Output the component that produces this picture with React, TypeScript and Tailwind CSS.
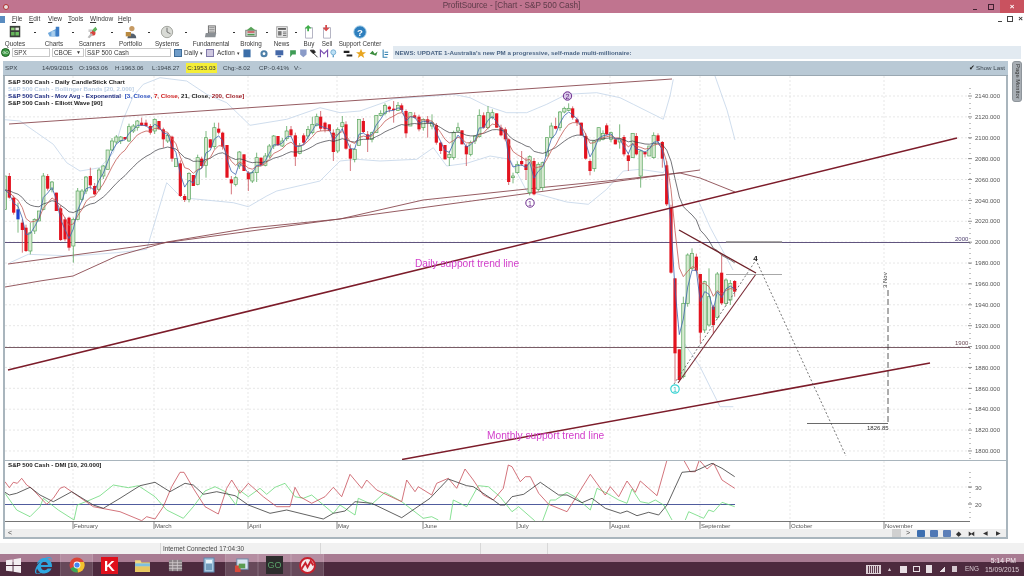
import React from "react";
import { FaInternetExplorer } from "react-icons/fa";

type C = number[];
// x, top, bottom, kind (0 red, 1 green, 2 blue), wickTop, wickBottom
const z3: C[] = [[15,300,400,1],[28,300,365,0],[41,365,410,0],[54,400,430,2,380,470],[67,440,462,0,430,530],[78,455,525,0],[91,470,525,1,440,535],[104,430,465,1],[117,405,435,1],[130,300,400,1],[143,300,338,0],[156,318,340,1],[169,350,405,0],[182,397,492,0],[195,430,490,0],[207,425,515,0],[220,430,510,1,425,560],[233,345,430,1],[246,345,370,1],[258,303,345,1],[271,300,328,0,275,340],[284,330,355,0],[297,282,340,1],[310,270,300,1],[323,222,280,1],[336,195,222,1],[349,183,198,1],[362,183,195,1],[375,183,190,0],[387,152,195,1],[400,150,165,1],[412,135,155,1],[425,140,148,0,125,150],[438,140,150,0],[451,150,170,0],[464,130,165,1],[477,135,160,0],[490,160,190,0,155,215],[503,178,195,1],[516,182,248,0],[528,248,272,1],[541,262,360,0],[554,360,372,0],[567,292,370,1],[580,297,330,0],[593,245,325,1],[605,248,270,0],[618,185,268,1,165,305],[631,190,215,0],[643,155,212,1,140,220],[656,158,170,0,140,175],[668,170,212,0],[681,207,305,0],[694,310,322,0,300,355],[707,305,325,1],[718,228,270,1],[732,235,285,0],[745,290,310,0,285,345],[757,290,315,1],[770,245,290,1,230,318],[783,245,268,0],[796,240,268,1],[808,210,240,1],[821,180,210,1],[834,180,208,0],[847,195,210,1],[860,165,188,1,150,195],[873,160,178,0,150,182],[886,178,242,0,170,270],[899,210,232,1],[911,178,200,0],[924,160,180,1,150,190],[937,145,170,1,122,175],[950,122,148,1],[962,122,158,0,105,165],[975,140,160,0],[988,145,165,0],[1000,170,228,0,160,255],[1013,160,225,1]];
const z4: C[] = [[7,140,152,1,120,165],[18,145,218,0],[31,218,248,0,205,285],[44,220,250,1],[57,130,208,1],[70,135,168,0],[83,175,190,0,165,228],[96,170,190,1],[109,118,170,1],[122,112,118,1],[135,88,112,1],[148,92,100,0],[161,98,102,0,75,140],[174,88,103,1,78,105],[185,88,102,0],[198,105,172,0,100,185],[211,110,150,1],[224,118,125,0],[237,122,160,0],[250,130,155,1],[263,130,140,0,120,185],[276,140,150,1,115,160],[289,147,200,0],[302,200,225,0],[315,207,250,0],[328,235,245,1,225,270],[341,170,245,1],[354,155,165,1,140,170],[366,163,205,0],[379,210,235,0,205,270],[392,200,235,1],[405,180,195,1],[418,118,182,1,100,185],[431,118,155,0],[444,110,155,1,90,160],[457,110,125,1,100,130],[470,112,155,0],[483,155,178,0],[496,160,190,0],[506,190,318,0],[519,300,305,1,290,322],[532,265,290,1],[545,255,265,0,225,270],[558,265,282,0,245,312],[569,242,350,1,238,358],[582,255,355,0],[595,265,340,1],[608,260,335,1],[621,185,240,1],[634,150,185,1,140,190],[647,150,158,0,125,160],[660,108,155,1],[673,97,108,1,92,112],[686,97,103,1,82,105],[698,97,125,0],[711,130,140,0,125,150],[724,140,178,0],[737,180,248,0],[750,255,285,0,250,298],[763,195,278,1],[776,155,195,1],[789,172,190,1],[800,148,175,0,142,178],[813,170,190,1],[826,190,205,0],[839,188,198,1,145,218],[852,183,235,0],[865,238,255,0,230,285],[878,172,245,1],[889,180,235,0],[902,225,300,1,222,335],[915,228,235,0],[928,210,240,1],[941,178,245,1],[954,178,195,0],[967,198,248,0,195,275],[980,268,385,0,255,390],[993,395,590,0]];
const z5: C[] = [[165,235,460,0,235,545],[178,448,540,0,448,545],[190,310,530,1,290,535],[203,165,310,1,160,320],[216,160,205,1,145,210],[229,170,212,0],[241,222,398,0,222,430],[254,245,390,1],[267,290,375,1,205,380],[280,320,375,0,315,400],[292,222,352,1],[305,218,310,0,165,315],[318,240,310,1,235,318],[331,250,300,1,240,315],[344,243,275,0,240,290]];

type K = { x: number; t: number; b: number; k: number; wt: number; wb: number };
const mk = (list: C[], ox: number, oy: number): K[] =>
  list.map((c, i) => ({
    x: ox + c[0] / 3,
    t: oy + c[1] / 3,
    b: oy + c[2] / 3,
    k: c[3],
    wt: c[4] !== undefined ? oy + c[4] / 3 : oy + c[1] / 3 - ((i * 7) % 4),
    wb: c[5] !== undefined ? oy + c[5] / 3 : oy + c[2] / 3 + ((i * 5) % 4),
  }));
const candles: K[] = [...mk(z3, 0, 76), ...mk(z4, 340, 76), ...mk(z5, 620, 200)];
const closes = candles.map((c) => (c.k === 0 ? c.b : c.t));
const ema = (n: number, seed: number) => {
  const a = 2 / (n + 1);
  let v = seed;
  return closes.map((c, i) => {
    v = i === 0 ? seed : a * c + (1 - a) * v;
    return `${candles[i].x.toFixed(1)},${v.toFixed(1)}`;
  }).join(" ");
};
const zp = (pts: number[][], ox: number, oy: number) => pts.map((p) => `${(ox + p[0] / 3).toFixed(1)},${(oy + p[1] / 3).toFixed(1)}`).join(" ");

const upper = [zp([[0,130],[60,135],[110,170],[160,205],[200,260],[240,285],[300,275],[340,230],[370,130],[400,60],[430,25],[480,5],[560,15],[620,55],[680,80],[750,148],[860,130],[960,95],[1020,110]],0,76), zp([[0,110],[60,105],[130,80],[160,68],[280,60],[340,55],[390,65],[440,90],[500,110],[560,110],[620,85],[680,55],[770,50],[840,65],[880,85],[970,130],[990,60],[1000,10]],340,76), "715,76 727,110 735,140", "698,200 710,227 733,270"];
const lower = [zp([[30,560],[85,535],[220,540],[350,530],[440,520],[470,420],[500,320],[545,365],[700,380],[745,392],[800,360],[830,345],[960,315],[1020,255]],0,76), zp([[0,255],[50,250],[120,255],[230,250],[280,215],[320,270],[380,262],[450,240],[510,250],[560,345],[680,378],[745,385],[800,340],[850,285],[900,280],[970,290],[980,270]],340,76), zp([[190,425],[240,500],[300,620],[340,620]],620,200)];

const redD = [[15,80],[28,98],[40,82],[52,85],[65,70],[80,90],[95,100],[140,148],[160,130],[180,100],[193,95],[215,110],[280,155],[360,170],[425,197],[440,185],[465,192],[490,155],[515,95],[540,52],[552,52],[580,100],[615,155],[655,177],[680,100],[695,75],[720,115],[745,85],[790,125],[830,155],[870,155],[885,97],[900,125],[935,145],[975,125],[1000,97],[1025,125],[1050,58],[1085,100],[1100,75],[1130,105],[1205,140],[1220,75],[1245,110],[1255,95],[1295,120],[1310,85],[1345,70],[1370,100],[1395,42],[1420,75],[1450,120],[1480,135],[1510,100],[1525,30],[1536,35],[1561,80],[1576,65],[1591,65],[1616,115],[1646,148],[1701,170],[1771,58],[1816,120],[1831,95],[1856,125],[1881,78],[1906,112],[1921,78],[1971,122],[2001,15]];
const redD2 = [[2051,15],[2071,50],[2086,50],[2098,15],[2121,42],[2141,25],[2166,75],[2204,100]];
const blackD = [[15,112],[28,120],[50,115],[90,97],[120,120],[160,140],[215,110],[280,150],[310,160],[360,130],[420,92],[465,82],[510,110],[555,85],[580,90],[610,118],[650,110],[705,122],[745,150],[810,175],[860,165],[970,192],[1000,175],[1035,168],[1065,140],[1115,145],[1205,188],[1290,130],[1345,72],[1400,92],[1420,95],[1480,135],[1500,150],[1515,150],[1536,125],[1571,118],[1621,82],[1676,120],[1701,120],[1746,143],[1776,130],[1816,160],[1861,175],[1881,168],[1911,182],[1946,172],[1976,180],[2001,150],[2046,52],[2086,48],[2136,25],[2166,40],[2204,65]];
const greenD = [[[15,115],[50,165],[90,185],[120,155],[130,130],[175,165],[222,195],[232,150],[270,135],[300,122],[340,90],[385,98],[415,92],[465,125],[500,165],[550,190],[580,155],[615,108],[645,95],[680,112],[708,150],[718,105],[745,125],[780,100],[800,118],[825,97],[855,85],[885,125],[910,130],[935,120],[1000,175],[1020,150],[1065,180],[1075,130],[1115,148],[1155,112],[1205,140],[1270,190],[1295,185],[1315,195]],[[1350,195],[1360,135],[1400,155],[1435,92],[1465,95],[1500,125],[1536,170],[1556,155],[1604,197]],[[1628,197],[1651,135],[1666,135],[1701,112],[1731,130],[1771,165],[1791,100],[1821,115],[1856,135],[1881,145],[1896,102],[1921,140],[1946,145],[1966,135],[1991,150],[2016,195]],[[2056,195],[2066,170],[2111,190],[2126,165],[2141,170],[2166,142],[2204,155]]];

const months: [string, number][] = [["February",73],["March",154],["April",248],["May",337],["June",423],["July",517],["August",610],["September",700],["October",790],["November",884]];
const yVal = (v: number) => 96 + (2140 - v) * 1.044;
const levels = Array.from({ length: 18 }, (_, i) => 2140 - i * 20);
const LS = "'Liberation Sans', sans-serif";

function MainChart() {
  return (
    <svg viewBox="5 76 1000 384" className="block w-[1000px] h-[384px] bg-white">
      {levels.map((v) => <line key={v} x1="5" x2="970" y1={yVal(v)} y2={yVal(v)} stroke="#dcdcdc" strokeWidth="0.7" strokeDasharray="2 2" />)}
      {months.map(([m, x]) => <line key={m} x1={x} x2={x} y1="76" y2="460" stroke="#dcdcdc" strokeWidth="0.7" strokeDasharray="2 2" />)}
      <g fill="none" stroke="#c3d4e8" strokeWidth="0.8">
        {[...upper, ...lower].map((p, i) => <polyline key={i} points={p} />)}
      </g>
      <line x1="3" x2="970" y1="242.5" y2="242.5" stroke="#4f4270" strokeWidth="0.9" />
      <line x1="3" x2="970" y1="347.5" y2="347.5" stroke="#6b4a55" strokeWidth="0.9" />
      <g fill="none" stroke="#8a4a50" strokeWidth="0.9">
        <line x1="9" y1="124" x2="672" y2="79" />
        <line x1="8" y1="264" x2="700" y2="170" />
        <polyline points="5,287 40,281 73,276 117,256 167,242 250,228 340,219 423,200 527,189 607,181 680,173 700,178 735,192" />
      </g>
      {candles.map((c, i) => {
        const col = c.k === 0 ? "#e3131f" : c.k === 2 ? "#1d3fd0" : "#5aa65e";
        const fill = c.k === 0 ? "#e3131f" : c.k === 2 ? "#1d3fd0" : "#d8ead2";
        return (
          <g key={i}>
            <line x1={c.x} x2={c.x} y1={c.wt} y2={c.wb} stroke={c.k === 0 ? "#c9505a" : "#5aa65e"} strokeWidth="0.8" />
            <rect x={c.x - 1.6} y={c.t} width="3.2" height={Math.max(c.b - c.t, 1)} fill={fill} stroke={col} strokeWidth={c.k === 1 ? 0.7 : 0} />
          </g>
        );
      })}
      <polyline points={ema(21, 190)} fill="none" stroke="#3a3a40" strokeWidth="0.7" />
      <polyline points={ema(7, 190)} fill="none" stroke="#c25a55" strokeWidth="0.8" />
      <polyline points={ema(3, 190)} fill="none" stroke="#3b62ae" strokeWidth="0.8" />
      <line x1="8" y1="370" x2="957" y2="138" stroke="#7c1c2a" strokeWidth="1.5" />
      <line x1="402" y1="459.5" x2="930" y2="363" stroke="#7c1c2a" strokeWidth="1.5" />
      <line x1="679" y1="230" x2="756" y2="273" stroke="#6e2028" strokeWidth="1.4" />
      <line x1="678" y1="383" x2="756" y2="274" stroke="#7a2a35" strokeWidth="1.1" />
      <line x1="726" y1="242" x2="782" y2="242" stroke="#8c8a8a" strokeWidth="1.3" />
      <line x1="726" y1="274.5" x2="782" y2="274.5" stroke="#a8a8a8" strokeWidth="1.1" />
      <polyline points="674,384 756,260 846,456" fill="none" stroke="#555" strokeWidth="0.8" strokeDasharray="2 2" />
      <line x1="888" y1="290" x2="888" y2="423" stroke="#333" strokeWidth="0.8" strokeDasharray="6 3" />
      <line x1="807" y1="423.5" x2="888" y2="423.5" stroke="#444" strokeWidth="0.8" />
      <g fontFamily={LS} fontSize="6.2" fontWeight="700">
        <text x="8" y="84" fill="#1a1a1a">S&amp;P 500 Cash - Daily CandleStick Chart</text>
        <text x="8" y="91" fill="#bcd0e6">S&amp;P 500 Cash - Bollinger Bands [20, 2.000]</text>
        <text x="8" y="98" fill="#1c2a80">S&amp;P 500 Cash - Mov Avg - Exponential <tspan dx="2" fill="#2b50c0">[3, Close,</tspan> <tspan fill="#d02020">7, Close,</tspan> <tspan fill="#222">21, Close,</tspan> <tspan fill="#a02028">200, Close]</tspan></text>
        <text x="8" y="105" fill="#1a1a1a">S&amp;P 500 Cash - Elliott Wave [90]</text>
      </g>
      <g fontFamily={LS} fontSize="10.2" fill="#d23ecb">
        <text x="415" y="267">Daily support trend line</text>
        <text x="487" y="439">Monthly support trend line</text>
      </g>
      <circle cx="530" cy="203" r="4.2" fill="#fff" stroke="#6b2a8c" strokeWidth="1" />
      <text x="530" y="205.5" textAnchor="middle" fontFamily={LS} fontSize="7" fill="#6b2a8c">1</text>
      <circle cx="567.5" cy="96" r="4.2" fill="#d8c8e8" stroke="#6b2a8c" strokeWidth="1" />
      <text x="567.5" y="98.5" textAnchor="middle" fontFamily={LS} fontSize="7" fill="#5b1a7c">2</text>
      <circle cx="675" cy="389" r="4.2" fill="#fff" stroke="#35d3d3" strokeWidth="1.2" />
      <text x="675" y="391.5" textAnchor="middle" fontFamily={LS} fontSize="7" fill="#2cc0c0">1</text>
      <text x="755.5" y="261" textAnchor="middle" fontFamily={LS} fontSize="8" fontWeight="700" fill="#222">4</text>
      <text x="0" y="0" transform="translate(887,288) rotate(-90)" fontFamily={LS} fontSize="6" fill="#333">3 Nov</text>
      <text x="867" y="430" fontFamily={LS} fontSize="6" fill="#333">1826.85</text>
      <text x="955" y="241" fontFamily={LS} fontSize="6" fill="#4f4270">2000</text>
      <text x="955" y="345" fontFamily={LS} fontSize="6" fill="#6b4a55">1900</text>
      <line x1="970" x2="970" y1="88" y2="460" stroke="#888" strokeWidth="1" strokeDasharray="1 4" />
      {levels.map((v) => (
        <g key={v}>
          <line x1="968" x2="972" y1={yVal(v)} y2={yVal(v)} stroke="#777" strokeWidth="0.8" />
          <text x="975" y={yVal(v) + 2.2} fontFamily={LS} fontSize="6" fill="#555">{v}.000</text>
        </g>
      ))}
    </svg>
  );
}

function DmiChart() {
  const o = 455;
  return (
    <svg viewBox="5 461 1000 68" className="block w-[1000px] h-[68px] bg-white">
      <line x1="5" x2="970" y1="487" y2="487" stroke="#dcdcdc" strokeWidth="0.7" strokeDasharray="2 2" />
      {months.map(([m, x]) => <line key={m} x1={x} x2={x} y1="461" y2="521" stroke="#dcdcdc" strokeWidth="0.7" strokeDasharray="2 2" />)}
      <line x1="5" x2="735" y1="504.5" y2="504.5" stroke="#3c4a92" strokeWidth="0.9" />
      <g fill="none" strokeWidth="0.8">
        {greenD.map((g, i) => <polyline key={i} points={zp(g, 0, o)} stroke="#6bd97a" />)}
        <polyline points={zp(redD, 0, o)} stroke="#c8505a" />
        <polyline points={zp(redD2, 0, o)} stroke="#c8505a" />
        <polyline points={zp(blackD, 0, o)} stroke="#3a3a3a" />
      </g>
      <text x="8" y="467" fontFamily={LS} fontSize="6.2" fontWeight="700" fill="#1a1a1a">S&amp;P 500 Cash - DMI [10, 20.000]</text>
      <line x1="5" x2="970" y1="521.5" y2="521.5" stroke="#666" strokeWidth="0.9" />
      {months.map(([m, x]) => (
        <g key={m}>
          <line x1={x} x2={x} y1="521" y2="529" stroke="#666" strokeWidth="0.8" />
          <text x={x + 1} y="527.5" fontFamily={LS} fontSize="6" fill="#555">{m}</text>
        </g>
      ))}
      <line x1="970" x2="970" y1="472" y2="520" stroke="#888" strokeWidth="1" strokeDasharray="1 4" />
      <line x1="968" x2="972" y1="487" y2="487" stroke="#777" /><line x1="968" x2="972" y1="504" y2="504" stroke="#777" />
      <text x="975" y="489.5" fontFamily={LS} fontSize="6" fill="#555">30</text>
      <text x="975" y="506.5" fontFamily={LS} fontSize="6" fill="#555">20</text>
    </svg>
  );
}

const Ico = ({ s = 14, children }: { s?: number; children: React.ReactNode }) => (
  <svg viewBox="0 0 16 16" width={s} height={s} className="block shrink-0">{children}</svg>
);
const icons: Record<string, React.ReactNode> = {
  Quotes: <Ico><rect x="2" y="1" width="12" height="13" fill="#3a3f3a" /><rect x="3.5" y="3" width="4" height="3" fill="#8fd07a" /><rect x="8.5" y="3" width="4" height="3" fill="#e8e8e0" /><rect x="3.5" y="8" width="4" height="4" fill="#65b35a" /><rect x="8.5" y="8" width="4" height="4" fill="#6cc060" /></Ico>,
  Charts: <Ico><path d="M1 9 L13 3 V13 H3 Z" fill="#6fa8dc" /><rect x="10" y="2" width="4" height="11" fill="#3d7cc4" /><rect x="5" y="7" width="4" height="6" fill="#a9cdec" /></Ico>,
  Scanners: <Ico><circle cx="9" cy="9" r="3" fill="#d7443e" /><path d="M3 14 L7 9 L9 11 L5 15Z" fill="#b9b9b9" /><path d="M8 6 L12 2 L14 5 L11 8Z" fill="#5fb35c" /><path d="M4 5 h4 v3 h-4z" fill="#c8c8c8" /></Ico>,
  Portfolio: <Ico><circle cx="9" cy="4" r="3" fill="#c69a63" /><path d="M4 15 C4 8 14 8 14 15Z" fill="#54606e" /><rect x="2" y="8" width="6" height="5" fill="#b98a40" /></Ico>,
  Systems: <Ico><circle cx="8" cy="8" r="6.5" fill="#d9dbd6" stroke="#9a9d96" /><path d="M8 3 V8 L12 10" stroke="#666" fill="none" /></Ico>,
  Fundamental: <Ico><rect x="5" y="1" width="8" height="8" fill="#ddd" stroke="#666" /><path d="M6 3 h6 M6 5 h6 M6 7 h6" stroke="#666" strokeWidth=".7" /><path d="M2 9 H14 L13 14 H1Z" fill="#8a8f94" /></Ico>,
  Broking: <Ico><rect x="2" y="6" width="12" height="7" fill="#c8cfc8" stroke="#7a7f7a" /><path d="M3 6 L8 2 L13 6" fill="#5aa35a" /><path d="M4 8 h8" stroke="#d04048" strokeWidth="1.5" /><path d="M4 11 h8" stroke="#4c9c50" strokeWidth="1.5" /></Ico>,
  News: <Ico><rect x="2" y="2" width="12" height="12" fill="#f0f0f0" stroke="#999" /><rect x="3.5" y="3.5" width="9" height="2" fill="#555" /><rect x="3.5" y="7" width="4" height="5" fill="#777" /><path d="M9 8 h4 M9 10 h4 M9 12 h4" stroke="#666" /></Ico>,
  Buy: <Ico><path d="M4 3 H12 V15 H4Z" fill="#fff" stroke="#aab" /><path d="M6 7 L6 4 H3 L7 0 L11 4 H8 V7Z" fill="#3fae49" /></Ico>,
  Sell: <Ico><path d="M4 3 H12 V15 H4Z" fill="#fff" stroke="#aab" /><path d="M6 0 V3 H3 L7 7 L11 3 H8 V0Z" fill="#d84a4a" /></Ico>,
  "Support Center": <Ico><circle cx="8" cy="8" r="7" fill="#2e7fbe" stroke="#8cc0e0" /><text x="8" y="12" textAnchor="middle" fontSize="11" fontWeight="700" fontFamily={LS} fill="#fff">?</text></Ico>,
};
const tools: [string, string, string][] = [["Quotes","w-[30px]","w-[10px]"],["Charts","w-[28px]","w-[10px]"],["Scanners","w-[28px]","w-[12px]"],["Portfolio","w-[25px]","w-[12px]"],["Systems","w-[24px]","w-[14px]"],["Fundamental","w-[36px]","w-[10px]"],["Broking","w-[24px]","w-[8px]"],["News","w-[21px]","w-[8px]"],["Buy","w-[18px]","w-0"],["Sell","w-[18px]","w-0"],["Support Center","w-[48px]","w-0"]];

const mini: [string, React.ReactNode][] = [
  ["w-[17px]", <path key="a" d="M2 2 h10 v11 h-10z" fill="#3b6ea8" />],
  ["w-[15px]", <g key="b"><circle cx="7" cy="8" r="5" fill="#4d7fa8" /><circle cx="7" cy="8" r="2" fill="#fff" /></g>],
  ["w-[14px]", <path key="c" d="M2 3 h11 v7 h-11z M5 11 h5 v2 h-5z" fill="#4468a8" />],
  ["w-[10px]", <path key="d" d="M3 3 h8 v6 h-5 l-3 4z" fill="#3f9c55" />],
  ["w-[11px]", <path key="e" d="M3 2 h9 v7 l-4.5 4 -4.5 -4z" fill="#8a9bc8" />],
  ["w-[10px]", <path key="f" d="M2 3 h5 l2 3 -3 2 -3 -3z M7 8 l5 5" fill="#222" stroke="#222" strokeWidth="1.2" />],
  ["w-[10px]", <path key="g" d="M2 13 L2 3 L7 8 L12 3 V13" fill="none" stroke="#7a4fb0" strokeWidth="1.6" />],
  ["w-[14px]", <g key="h"><circle cx="6" cy="6" r="3.5" fill="#bde0f5" stroke="#5a9cc8" /><rect x="5" y="10" width="2" height="3" fill="#5a9cc8" /></g>],
  ["w-[13px]", <path key="i" d="M1 4 h8 v3 h-8z M5 9 h8 v3 h-8z" fill="#222" />],
  ["w-[13px]", <path key="j" d="M7 1 L9 6 H14 L10 9 L11.5 14 L7 11 L2.5 14 L4 9 L0 6 H5Z" fill="#e8a51f" />],
  ["w-[12px]", <path key="k" d="M1 8 L5 4 L8 8 L12 5 L10 11 L5 9Z" fill="#3a8c3c" />],
  ["w-[10px]", <path key="l" d="M3 2 v11 h6 M5 6 h5 M5 9 h5" stroke="#2f7fb0" strokeWidth="1.5" fill="none" />],
];
const Mini = ({ c, w }: { c: React.ReactNode; w: string }) => <div className={`${w} flex justify-start`}><svg viewBox="0 0 14 14" width="10" height="10" className="block">{c}</svg></div>;

const TaskBtn = ({ active, children }: { active?: boolean; children: React.ReactNode }) => (
  <div className={`h-full flex items-center justify-center w-[33px] ${active ? "bg-white/15 border-x border-white/10" : ""}`}>{children}</div>
);

export default function App() {
  return (
    <div className="w-[1024px] h-[576px] overflow-hidden bg-white flex flex-col text-[#3a3a3a] blur-[0.3px]" style={{ fontFamily: LS }}>
      {/* Title bar */}
      <div className="h-[13px] bg-[#c0748f] flex items-center relative shrink-0">
        <div className="ml-[3px] w-[6px] h-[6px] rounded-full bg-[#e8e0e0] border border-[#b03030]" />
        <div className="flex-1 text-center text-[8.2px] text-[#5c3a48] pl-[46px]">ProfitSource - [Chart - S&amp;P 500 Cash]</div>
        <div className="flex items-center h-full text-[#5a3040]">
          <div className="w-[14px] h-full flex items-end justify-center pb-[3px]"><div className="w-[4px] h-[1.5px] bg-[#402030]" /></div>
          <div className="w-[18px] h-full flex items-center justify-center"><div className="w-[6px] h-[6px] border border-[#402030]" /></div>
          <div className="w-[24px] h-full bg-[#c9525f] flex items-center justify-center text-white text-[8px] font-bold leading-none">×</div>
        </div>
      </div>
      {/* Menu */}
      <div className="h-[12px] flex items-center text-[6.5px] shrink-0 relative">
        <div className="w-[6px] h-[7px] bg-[#5a8cc0] mr-[7px] -ml-[1px]" />
        <span className="w-[17px]"><u>F</u>ile</span>
        <span className="w-[19px]"><u>E</u>dit</span>
        <span className="w-[20px]"><u>V</u>iew</span>
        <span className="w-[22px]"><u>T</u>ools</span>
        <span className="w-[28px]"><u>W</u>indow</span>
        <span><u>H</u>elp</span>
        <div className="ml-auto flex items-center text-[#333] gap-[3px] pr-[1px] text-[8px] font-bold leading-none">
          <div className="w-[4px] h-[1.5px] bg-[#444] mt-[5px]" />
          <div className="w-[6px] h-[6px] border border-[#444] mx-[2px]" />
          <span>×</span>
        </div>
      </div>
      {/* Big toolbar */}
      <div className="h-[21px] flex shrink-0 pt-0">
        {tools.map(([name, w, dot]) => (
          <React.Fragment key={name}>
            <div className={`${w} shrink-0 flex flex-col items-center`}>
              {icons[name]}
              <span className="text-[6.3px] leading-[7px] whitespace-nowrap mt-[1px]">{name}</span>
            </div>
            {dot !== "w-0" && <div className={`${dot} shrink-0 flex justify-center pt-[7px]`}><div className="w-[2px] h-[1px] bg-[#333]" /></div>}
          </React.Fragment>
        ))}
      </div>
      {/* Symbol row */}
      <div className="h-[13px] flex items-center shrink-0 text-[6.4px] whitespace-nowrap">
        <div className="w-[9px] h-[9px] rounded-full bg-[#3c9a44] border border-[#1c5c20] ml-[1px] mr-[2px] text-[4px] leading-[7px] text-center text-white">GO</div>
        <div className="w-[38px] h-[9px] border border-[#c8c8c8] px-[1px] leading-[7px]">SPX</div>
        <div className="w-[32px] h-[9px] border border-[#c8c8c8] ml-[2px] pl-[1px] leading-[7px] flex justify-between pr-[2px]">CBOE <span className="text-[5px]">▼</span></div>
        <div className="w-[86px] h-[9px] border border-[#c8c8c8] ml-[1px] px-[1px] leading-[7px]">S&amp;P 500 Cash</div>
        <div className="ml-[3px] w-[8px] h-[8px] bg-[#6f9cc8] border border-[#3f6c98]" />
        <span className="ml-[2px] w-[21px]">Daily <span className="text-[5px]">▾</span></span>
        <div className="w-[8px] h-[8px] bg-[#cfc8e0] border border-[#7f78a8] ml-[1px]" />
        <span className="ml-[3px] w-[25px]">Action <span className="text-[5px]">▾</span></span>
        <div className="flex items-center">
          {mini.map(([w, c], i) => <Mini key={i} w={w} c={c} />)}
        </div>
        <div className="ml-[2px] flex-1 h-[13px] bg-[#e2eaf1] mr-[3px] flex items-center pl-[2px] text-[#4a6484] font-bold text-[6.2px]">
          NEWS: UPDATE 1-Australia's new PM a progressive, self-made multi-millionaire:
        </div>
      </div>
      {/* Main area */}
      <div className="flex mt-[2px] shrink-0">
        <div className="ml-[3px] w-[1005px] border-x-2 border-b-2 border-[#a9b5bd] flex flex-col h-[478px]">
          <div className="h-[15px] bg-[#b9c9d5] flex items-center text-[6.2px] text-[#3c464f] -mx-[2px] pl-[2px] border-b border-[#9aa8b2] whitespace-nowrap">
            <span className="w-[37px]">SPX</span>
            <span className="w-[37px]">14/09/2015</span>
            <span className="w-[36px]">O:1963.06</span>
            <span className="w-[37px]">H:1963.06</span>
            <span className="w-[34px]">L:1948.27</span>
            <span className="w-[31px] bg-[#f4ee38] text-[#333] mr-[6px] text-center">C:1953.03</span>
            <span className="w-[36px]">Chg:-8.02</span>
            <span className="w-[35px]">CP:-0.41%</span>
            <span>V:-</span>
            <div className="ml-auto flex items-center pr-[3px] gap-[1px]">
              <span className="text-[7px] text-[#222]">✔</span>
              <span>Show Last</span>
            </div>
          </div>
          <MainChart />
          <div className="h-px bg-[#a9b5bd]" />
          <DmiChart />
          <div className="h-[8px] bg-[#eeeeee] flex items-center text-[7px] text-[#444] pl-[3px] relative">
            <span>&lt;</span>
            <div className="ml-auto flex items-center h-full">
              <div className="w-[9px] h-full bg-[#d0d0d0] mr-[5px]" />
              <span className="w-[11px]">&gt;</span>
              {["#3d6fb0","#4f78b5","#5c7fb8"].map((c) => <div key={c} className="w-[8px] h-[7px] mr-[5px] rounded-[1px]" style={{ background: c }} />)}
              <div className="w-[7px] text-[7px] mr-[5px] leading-none text-[#333]">◆</div>
              <div className="w-[8px] text-[7px] mr-[7px] leading-none text-[#333]">⧓</div>
              <div className="w-[6px] text-[6px] mr-[7px] leading-none text-[#333]">◀</div>
              <div className="w-[6px] text-[6px] mr-[4px] leading-none text-[#333]">▶</div>
            </div>
          </div>
        </div>
        <div className="ml-[4px] mt-0 w-[10px] h-[41px] bg-[#a8aeb4] rounded-[3px] flex items-center justify-center border border-[#8e959b]">
          <span className="rotate-90 whitespace-nowrap text-[5.8px] text-[#333]">Page Monitor</span>
        </div>
      </div>
      {/* Status bar */}
      <div className="mt-[4px] h-[11px] bg-[#f1f1f1] flex items-center shrink-0 text-[6.4px] text-[#444]">
        <div className="w-[160px] h-full" />
        <div className="w-[160px] h-full border-l border-[#d8d8d8] flex items-center pl-[2px] whitespace-nowrap">Internet Connected 17:04:30</div>
        <div className="w-[160px] h-full border-l border-[#d8d8d8]" />
        <div className="w-[67px] h-full border-l border-[#d8d8d8]" />
        <div className="flex-1 h-full border-l border-[#d8d8d8]" />
      </div>
      {/* Taskbar */}
      <div className="flex-1 bg-[linear-gradient(#a87b92_0,#a87b92_36%,#4d2a3e_37%,#4d2a3e_100%)] flex items-center">
        <div className="w-[27px] h-full flex items-center justify-center">
          <svg viewBox="0 0 16 16" width="15" height="15"><path d="M0 2.5 L7 1.5 V7.5 H0Z M8 1.4 L16 0 V7.5 H8Z M0 8.5 H7 V14.5 L0 13.5Z M8 8.5 H16 V16 L8 14.6Z" fill="#f3eef1" /></svg>
        </div>
        <TaskBtn><FaInternetExplorer size={17} color="#2ea7e0" /></TaskBtn>
        <TaskBtn active>
          <svg viewBox="0 0 16 16" width="16" height="16"><circle cx="8" cy="8" r="7.5" fill="#db4437" /><path d="M8 8 L1.3 11.5 A7.5 7.5 0 0 0 9 15.4Z" fill="#3aa757" /><path d="M8 8 L9 15.4 A7.5 7.5 0 0 0 15 5 L8 5Z" fill="#f2c22e" /><circle cx="8" cy="8" r="3.4" fill="#fff" /><circle cx="8" cy="8" r="2.6" fill="#4285f4" /></svg>
        </TaskBtn>
        <TaskBtn><div className="w-[17px] h-[17px] bg-[#e0101c] text-white font-bold text-[15px] leading-[17px] text-center">K</div></TaskBtn>
        <TaskBtn><svg viewBox="0 0 16 16" width="17" height="17"><path d="M1 3 H6 L7 5 H15 V14 H1Z" fill="#f0d880" /><rect x="1" y="6" width="14" height="3" fill="#7fc0e0" /><rect x="1" y="9" width="14" height="5" fill="#e8c860" /></svg></TaskBtn>
        <TaskBtn><svg viewBox="0 0 16 16" width="15" height="15"><path d="M1 2 H15 V14 H1Z" fill="#8c8488" /><path d="M1 5 H15 M1 8 H15 M1 11 H15 M5 2 V14 M10 2 V14" stroke="#d4cdd0" strokeWidth=".8" /></svg></TaskBtn>
        <TaskBtn><svg viewBox="0 0 16 16" width="16" height="16"><rect x="3" y="1" width="10" height="14" fill="#a8c8e0" stroke="#5c88b0" /><rect x="5" y="3" width="6" height="3" fill="#e8f2f8" /><path d="M5 8 h6 M5 10 h6 M5 12 h6" stroke="#3c7098" /></svg></TaskBtn>
        <TaskBtn active><svg viewBox="0 0 16 16" width="15" height="15"><rect x="3" y="1" width="12" height="11" fill="#d8e4f0" stroke="#6a88a8" /><rect x="1" y="8" width="6" height="7" fill="#d84a3a" /><rect x="5" y="6" width="7" height="5" fill="#5a9c50" /></svg></TaskBtn>
        <TaskBtn active><div className="w-[17px] h-[18px] bg-[#2c2c2c] text-[#5aa06a] text-[9px] leading-[18px] text-center">GO</div></TaskBtn>
        <TaskBtn active>
          <svg viewBox="0 0 16 16" width="17" height="17"><circle cx="8" cy="8" r="7" fill="#f4e8ea" stroke="#c8202c" strokeWidth="1.8" /><path d="M2.5 11 L6 5.5 L8 9.5 L11 4 L13.5 8" fill="none" stroke="#c8202c" strokeWidth="1.8" /></svg>
        </TaskBtn>
        <div className="ml-auto flex items-center h-full text-[#dccdd5] text-[6.4px] pt-[8px]">
          <div className="w-[15px] h-[9px] border border-[#dcd0d6] bg-[repeating-linear-gradient(90deg,#dcd0d6_0,#dcd0d6_1px,#5d3b4e_1px,#5d3b4e_2px)]" />
          <span className="ml-[7px] w-[12px] text-[6px]">▴</span>
          <div className="w-[7px] h-[7px] bg-[#e8dfe4]" />
          <div className="ml-[6px] w-[7px] h-[6px] border border-[#e8dfe4]" />
          <div className="ml-[6px] w-[6px] h-[8px] bg-[#e8dfe4]" />
          <div className="ml-[7px] w-[6px] h-[5px] bg-[linear-gradient(135deg,transparent_50%,#e8dfe4_50%)]" />
          <div className="ml-[7px] w-[5px] h-[6px] bg-[#d5c8cf]" />
          <span className="ml-[8px] w-[20px]">ENG</span>
          <div className="w-[39px] text-right pr-[8px] leading-[9px]">
            <div className="text-[#f4eef1] text-[6.8px] whitespace-nowrap -mt-[8px] mb-0">5:14 PM</div>
            <div className="whitespace-nowrap text-[6.8px] -mr-[1px]">15/09/2015</div>
          </div>
        </div>
      </div>
    </div>
  );
}
